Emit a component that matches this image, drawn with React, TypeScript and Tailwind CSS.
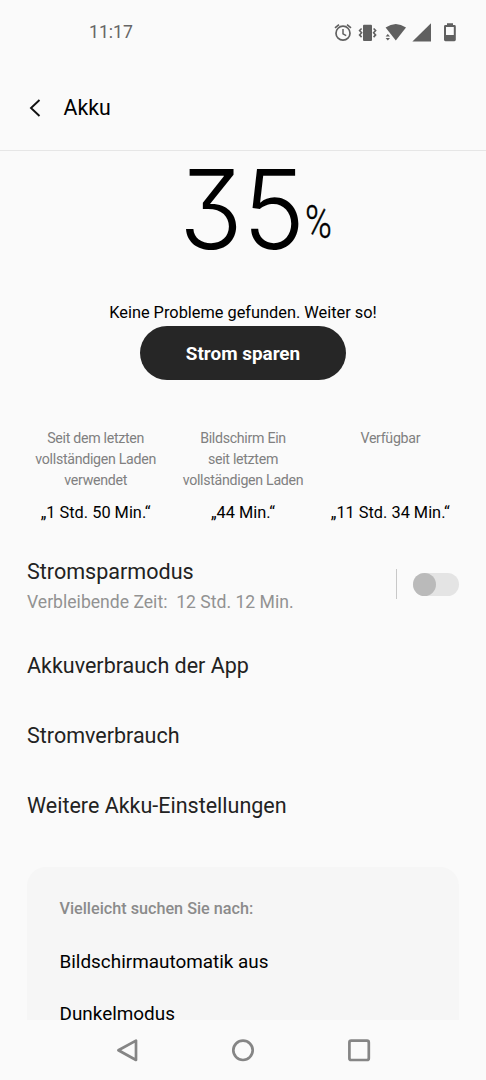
const stats = [
  { label: ["Seit dem letzten", "vollständigen Laden", "verwendet"], value: "„1 Std. 50 Min.“" },
  { label: ["Bildschirm Ein", "seit letztem", "vollständigen Laden"], value: "„44 Min.“" },
  { label: ["Verfügbar"], value: "„11 Std. 34 Min.“" },
];

const rows = ["Akkuverbrauch der App", "Stromverbrauch", "Weitere Akku-Einstellungen"];

function StatusIcons() {
  return (
    <svg width="130" height="24" viewBox="332 20 130 24" fill="none" className="text-[#606060]">
      <g stroke="currentColor" strokeWidth="1.7">
        <circle cx="343" cy="33.2" r="7" />
        <path d="M343 29v4.800l3.200 1.800" strokeWidth="1.5" />
        <path d="M335 27.800l4-3.200M351 27.800l-4-3.200" />
        <path d="M361.600 28.500l-2 2 2 2.200-2 2.200 2 2.200M373.600 28.500l2 2-2 2.200 2 2.200-2 2.200" strokeWidth="1.6" />
      </g>
      <g fill="currentColor">
        <rect x="363" y="24.800" width="9" height="16.200" rx="1" />
        <path d="M385.600 27.600Q395.800 20.400 406 27.600L395.800 40.600Z" />
        <path d="M385.600 36.600l2.200-2.600 2.200 2.600zM385.600 38l2.200 2.600 2.200-2.600z" />
        <path d="M412.400 41.400L431 23.200V41.400Z" />
        <path fillRule="evenodd" d="M447 25v-1.800h6V25h1.400q1.400 0 1.400 1.400v13.400q0 1.400-1.400 1.400h-9q-1.400 0-1.400-1.400V26.400q0-1.400 1.400-1.400zM446 27v8h7.800v-8z" />
      </g>
    </svg>
  );
}

export default function App() {
  return (
    <div className="flex h-[1080px] w-[486px] flex-col overflow-hidden bg-[#fafafa] font-['Roboto',sans-serif] text-black">
      <div className="flex h-16 shrink-0 items-center justify-between pr-6 pl-[89px]">
        <span className="text-[17.6px] leading-6 text-[#666]">11:17</span>
        <StatusIcons />
      </div>

      <header className="flex h-[87px] shrink-0 items-center border-b border-[#e6e6e6] pt-[2px] pl-[29px]">
        <svg width="12" height="18" viewBox="0 0 12 18" fill="none" stroke="#111" strokeWidth="1.9">
          <path d="M10.500 1L2 9l8.500 8" />
        </svg>
        <h1 className="ml-[22.500px] text-[21.3px] leading-7">Akku</h1>
      </header>

      <main className="flex h-[869px] shrink-0 flex-col overflow-hidden">
        <div className="flex h-[150px] shrink-0 items-start pl-[179px]">
          <span className="w-[126px] origin-left scale-x-[0.955] font-['Inter',sans-serif] text-[110px] leading-[116px] font-light [font-feature-settings:'cv09']">35</span>
          <span className="mt-[43px] origin-left scale-x-[0.79] text-[46px] leading-[56px] font-light [-webkit-text-stroke:0.4px_black]">%</span>
        </div>

        <p className="h-[25px] shrink-0 text-center text-[16.35px] leading-6">Keine Probleme gefunden. Weiter so!</p>
        <button className="h-[54px] w-[206px] shrink-0 self-center rounded-full bg-[#262626] pt-[2px] text-[18.9px] font-bold text-white">
          Strom sparen
        </button>

        <div className="mt-[48px] grid shrink-0 grid-cols-3 px-[22px] text-center">
          {stats.map((s) => (
            <div key={s.value} className="flex h-[97px] flex-col">
              <div className="h-[74px] text-[14.2px] leading-[21px] tracking-[-0.3px] text-[#808080]">
                {s.label.map((l) => (
                  <div key={l}>{l}</div>
                ))}
              </div>
              <div className="text-[16.35px] leading-6">{s.value}</div>
            </div>
          ))}
        </div>

        <section className="mt-[32px] flex h-[60px] shrink-0 pr-[27px] pl-[27px]">
          <div className="flex-1">
            <div className="text-[21.55px] leading-[30px] text-[#222]">Stromsparmodus</div>
            <div className="text-[17.6px] leading-[30px] whitespace-pre text-[#929292]">Verbleibende Zeit:  12 Std. 12 Min.</div>
          </div>
          <div className="mt-[12px] h-[30px] w-px bg-[#c8c8c8]" />
          <div className="mt-[16px] ml-[16px] h-[23px] w-[46px] rounded-full bg-[#e4e4e4]">
            <div className="size-[23px] rounded-full bg-[#bababa]" />
          </div>
        </section>

        <ul className="mt-[14px] shrink-0 px-[27px] text-[21.5px] text-[#222]">
          {rows.map((r) => (
            <li key={r} className="h-[70px] leading-[70px]">{r}</li>
          ))}
        </ul>

        <section className="mx-[27px] mt-[26px] h-[200px] shrink-0 rounded-t-[19px] bg-[#f6f6f6] px-[32.500px] pt-[29px]">
          <h2 className="pt-px text-[16.2px] leading-6 font-medium text-[#8b8b8b]">Vielleicht suchen Sie nach:</h2>
          <ul className="mt-[14px] text-[18.9px]">
            <li className="h-[52px] leading-[53px]">Bildschirmautomatik aus</li>
            <li className="h-[53px] leading-[53px]">Dunkelmodus</li>
          </ul>
        </section>
      </main>

      <nav className="h-[60px] shrink-0">
        <svg width="486" height="60" viewBox="0 1020 486 60" fill="none" stroke="#858585" strokeWidth="2.7" strokeLinejoin="round">
          <path d="M136 1040.600V1060L118.400 1050.300Z" />
          <circle cx="243" cy="1050.300" r="9.700" />
          <rect x="349.400" y="1040.600" width="19.400" height="19.400" rx="1.800" />
        </svg>
      </nav>
    </div>
  );
}
